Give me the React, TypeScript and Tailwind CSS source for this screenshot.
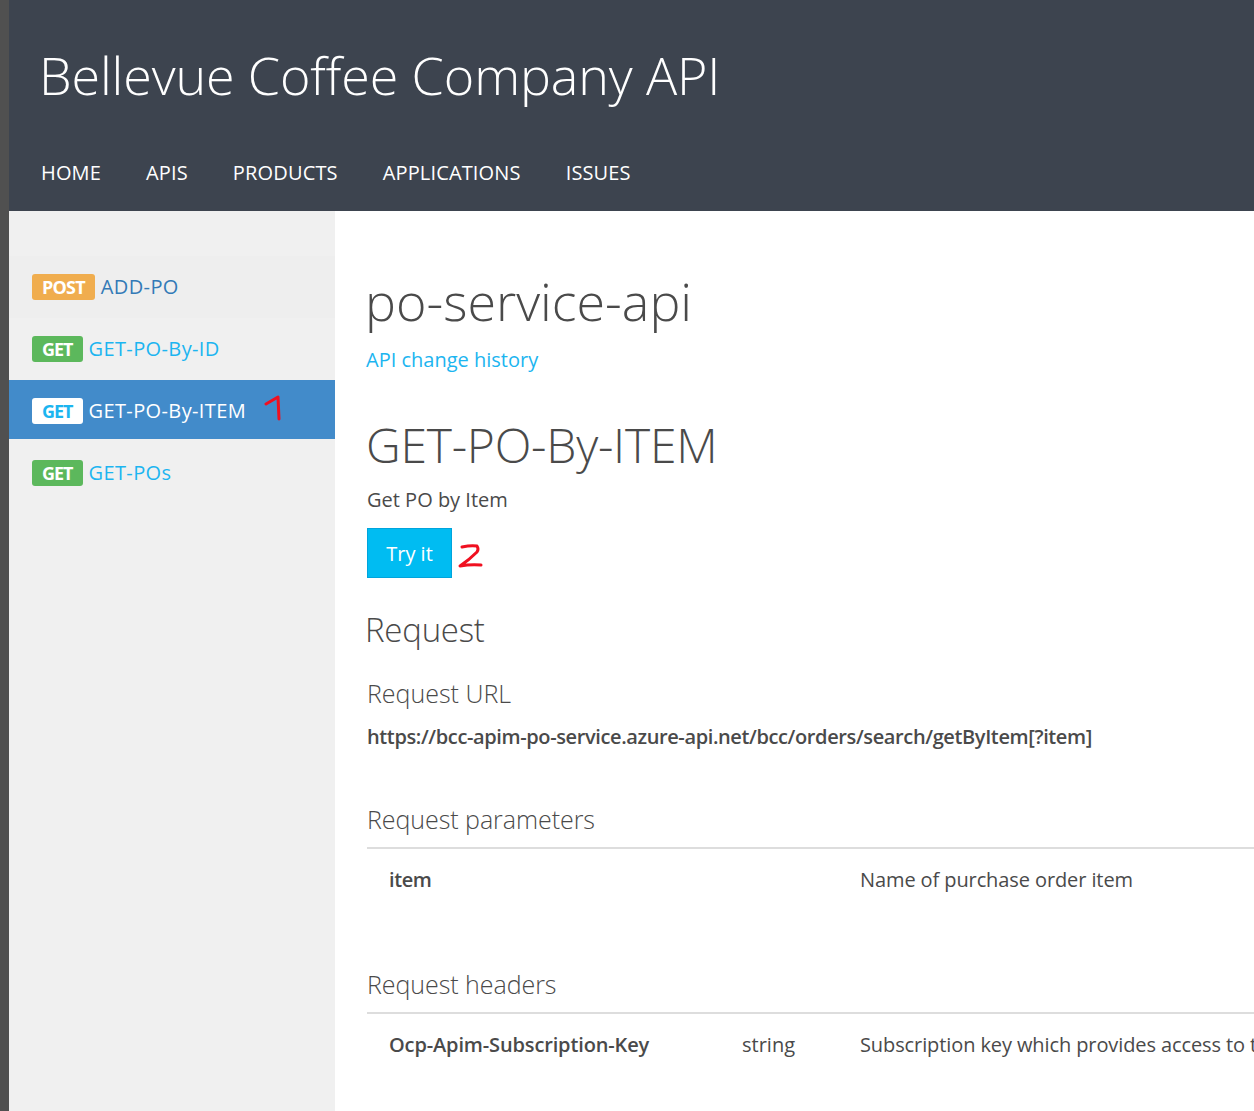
export default function App() {
  return (
    <div className="flex h-[1111px] w-[1254px] overflow-hidden bg-white font-['Open_Sans','Noto_Sans',sans-serif] text-[#4a4a4a]">
      <div className="w-[9px] shrink-0 bg-[#505050]" />
      <div className="flex min-w-0 flex-1 flex-col">
        <header className="h-[211px] shrink-0 bg-[#3d444f] pl-[30px] text-white">
          <h1 className="pt-[40px] text-[52px] font-light leading-[70px] tracking-[-0.12px]">Bellevue Coffee Company API</h1>
          <nav className="ml-[2px] mt-[49px] flex gap-[45px] text-[20px] leading-[28px] tracking-[0.15px]">
            <span>HOME</span><span>APIS</span><span>PRODUCTS</span><span>APPLICATIONS</span><span>ISSUES</span>
          </nav>
        </header>
        <div className="flex min-h-0 flex-1">
          <aside className="w-[326px] shrink-0 bg-[#f0f0f0] pt-[45px] text-[20px] tracking-[0.38px]">
            <div className="flex h-[62px] items-center bg-[#eeeeee] pl-[23px] text-[#337ab7]">
              <span className="mr-[6px] rounded-[3px] bg-[#f0ad4e] px-[10px] text-[18px] font-bold leading-[26px] tracking-[-0.8px] text-white">POST</span>ADD-PO
            </div>
            <div className="flex h-[62px] items-center pl-[23px] text-[#1cb5f0]">
              <span className="mr-[6px] rounded-[3px] bg-[#5cb85c] px-[10px] text-[18px] font-bold leading-[26px] tracking-[-1px] text-white">GET</span>GET-PO-By-ID
            </div>
            <div className="relative flex h-[59px] items-center bg-[#428bca] pl-[23px] pt-[2px] text-white">
              <span className="mr-[6px] rounded-[3px] bg-white px-[10px] text-[18px] font-bold leading-[26px] tracking-[-1px] text-[#1cb5f0]">GET</span>GET-PO-By-ITEM
              <svg className="absolute left-[255px] top-[14px]" width="20" height="28" fill="none" stroke="#f01020" strokeWidth="3" strokeLinecap="round" strokeLinejoin="round"><path d="M2 10 L14 3 L15 25" /></svg>
            </div>
            <div className="flex h-[65px] items-center pl-[23px] pt-[2px] text-[#1cb5f0]">
              <span className="mr-[6px] rounded-[3px] bg-[#5cb85c] px-[10px] text-[18px] font-bold leading-[26px] tracking-[-1px] text-white">GET</span>GET-POs
            </div>
          </aside>
          <main className="min-w-0 flex-1 pl-[32px]">
            <h2 className="ml-[-2px] mt-[55px] text-[52px] font-light leading-[70px]">po-service-api</h2>
            <a className="ml-[-1px] mt-[10px] block text-[20px] leading-[28px] text-[#1cb5f0]">API change history</a>
            <h2 className="ml-[-1px] mt-[41px] text-[48px] font-light leading-[60px] tracking-[-0.25px]">GET-PO-By-ITEM</h2>
            <p className="mt-[11px] text-[20px] leading-[28px]">Get PO by Item</p>
            <div className="mt-[14px] flex items-center">
              <button className="h-[50px] w-[85px] border border-[#00a4dc] bg-[#00bcf2] pt-[1px] text-[20px] text-white">Try it</button>
              <svg className="ml-[5px]" width="26" height="30" fill="none" stroke="#f01020" strokeWidth="3" strokeLinecap="round" strokeLinejoin="round"><path d="M5 9 Q14 7 20 8 Q22 11 20 14 Q12 22 3 28 Q14 26 24 27" /></svg>
            </div>
            <h3 className="ml-[-2px] mt-[30px] text-[33px] font-light leading-[44px] tracking-[-0.25px]">Request</h3>
            <h4 className="mt-[23px] text-[25px] font-light leading-[36px]">Request URL</h4>
            <p className="mt-[12px] text-[20px] font-semibold leading-[28px] tracking-[-0.38px]">https://bcc-apim-po-service.azure-api.net/bcc/orders/search/getByItem[?item]</p>
            <h4 className="mt-[50px] text-[25px] font-light leading-[36px] tracking-[-0.05px]">Request parameters</h4>
            <div className="mt-[10px] flex h-[105px] border-t-2 border-[#dddddd] pt-[17px] text-[20px] leading-[28px]">
              <span className="w-[493px] pl-[22px] font-semibold tracking-[-0.4px]">item</span>
              <span className="whitespace-nowrap tracking-[-0.1px]">Name of purchase order item</span>
            </div>
            <h4 className="mt-[14px] text-[25px] font-light leading-[36px] tracking-[-0.05px]">Request headers</h4>
            <div className="mt-[10px] flex border-t-2 border-[#dddddd] pt-[17px] text-[20px] leading-[28px]">
              <span className="w-[375px] shrink-0 pl-[22px] font-semibold tracking-[-0.14px]">Ocp-Apim-Subscription-Key</span>
              <span className="w-[118px] shrink-0">string</span>
              <span className="whitespace-nowrap tracking-[-0.1px]">Subscription key which provides access to this API</span>
            </div>
          </main>
        </div>
      </div>
    </div>
  );
}
